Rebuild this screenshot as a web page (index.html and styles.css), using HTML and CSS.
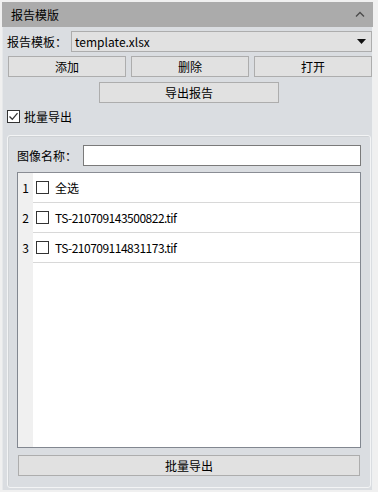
FILE: index.html
```html
<!DOCTYPE html>
<html lang="zh">
<head>
    <meta charset="UTF-8">
    <title>报告模版</title>
    <link rel="stylesheet" href="styles.css">
</head>
<body>
    <div class="panel">
        <!-- 标题栏 -->
        <div class="title-bar">
            <span>报告模版</span>
            <svg class="collapse" width="10" height="6" viewBox="0 0 10 6"><polyline points="1,5.5 5,1.5 9,5.5" fill="none" stroke="#4a4a4a" stroke-width="1.3"/></svg>
        </div>

        <!-- 模板选择 -->
        <div class="template-row">
            <span class="label">报告模板：</span>
            <div class="combo">
                <span>template.xlsx</span>
                <svg width="9" height="5" viewBox="0 0 9 5"><polygon points="0,0 9,0 4.5,5" fill="#111"/></svg>
            </div>
        </div>

        <div class="btn-row">
            <button class="btn">添加</button>
            <button class="btn">删除</button>
            <button class="btn">打开</button>
        </div>

        <div class="export-row">
            <button class="btn export-btn">导出报告</button>
        </div>

        <label class="check-row">
            <span class="check checked">
                <svg width="11" height="11" viewBox="0 0 11 11"><polyline points="1.5,5.5 4.3,8.3 9.5,2.2" fill="none" stroke="#333" stroke-width="1.3"/></svg>
            </span>
            <span>批量导出</span>
        </label>

        <!-- 批量导出 分组 -->
        <div class="group">
            <div class="name-row">
                <span class="label">图像名称：</span>
                <div class="text-input"></div>
            </div>

            <div class="table">
                <div class="row-head"></div>
                <div class="rows">
                    <div class="row"><span class="num">1</span><span class="check"></span><span>全选</span></div>
                    <div class="row"><span class="num">2</span><span class="check"></span><span class="file">TS-210709143500822.tif</span></div>
                    <div class="row"><span class="num">3</span><span class="check"></span><span class="file">TS-210709114831173.tif</span></div>
                </div>
            </div>

            <button class="btn batch-btn">批量导出</button>
        </div>
    </div>
</body>
</html>
```

FILE: styles.css
```css
/* 页面 */
body {
    margin: 0;
    background: #f0f0f0;
    font-family: "Microsoft YaHei", "Noto Sans CJK SC", sans-serif;
    font-size: 12px;
    color: #000;
}

/* 外框 */
.panel {
    margin: 2px 0 0 2px;
    width: 371px;
    height: 488px;
    background: #dadde1;
    border-left: 1px solid #e6e8ea;
    border-right: 1px solid #eef0f1;
    box-sizing: border-box;
    display: flex;
    flex-direction: column;
}

.title-bar {
    height: 25px;
    background: #ababab;
    display: flex;
    align-items: center;
    justify-content: space-between;
    padding: 0 8px 0 9px;
    margin-left: -1px;
    margin-right: -1px;
    font-size: 12px;
}

.collapse {
    margin-top: -1px;
}

.label {
    line-height: 20px;
    white-space: nowrap;
    flex-shrink: 0;
}

/* 模板选择 */
.template-row {
    display: flex;
    align-items: center;
    margin-top: 4px;
    padding-left: 4px;
}

.combo {
    margin-left: 4px;
    width: 301px;
    height: 21px;
    box-sizing: border-box;
    border: 1px solid #adadad;
    background: #e1e1e1;
    display: flex;
    align-items: center;
    justify-content: space-between;
    padding: 0 5px 0 3px;
}

/* 按钮 */
.btn {
    font-family: inherit;
    font-size: 12px;
    color: #000;
    background: #e1e1e1;
    border: 1px solid #adadad;
    height: 21px;
    padding: 0;
    line-height: 18px;
}

.btn-row {
    display: flex;
    gap: 5px;
    margin-top: 4px;
    padding-left: 5px;
}

.btn-row .btn {
    width: 118px;
}

.export-row {
    margin-top: 5px;
    padding-left: 96px;
}

.export-btn {
    width: 180px;
}

/* 复选框 */
.check {
    width: 13px;
    height: 13px;
    box-sizing: border-box;
    border: 1px solid #333;
    background: #fff;
    display: inline-flex;
    align-items: center;
    justify-content: center;
    flex-shrink: 0;
}

.check-row {
    display: flex;
    align-items: center;
    gap: 4px;
    margin-top: 7px;
    padding-left: 4px;
    font-size: 12px;
    height: 13px;
}

/* 分组框 */
.group {
    margin: 12px 0 0 4px;
    width: 364px;
    height: 353px;
    box-sizing: border-box;
    border: 1px solid #f3f4f5;
    border-radius: 3px;
    box-shadow: inset 1px 1px 0 #cfd2d5;
    padding: 9px 9px 0 9px;
    display: flex;
    flex-direction: column;
}

.name-row {
    display: flex;
    align-items: center;
    height: 21px;
}

.text-input {
    margin-left: 6px;
    flex: 1;
    height: 21px;
    box-sizing: border-box;
    border: 1px solid #7a7a7a;
    background: #fff;
}

/* 表格 */
.table {
    margin-top: 6px;
    height: 276px;
    box-sizing: border-box;
    border: 1px solid #828790;
    border-top-color: #8a8d94;
    display: flex;
    background: #fff;
    position: relative;
}

.row-head {
    width: 15px;
    background: #f0f0f0;
}

.rows {
    flex: 1;
}

.row {
    height: 30px;
    box-sizing: border-box;
    border-bottom: 1px solid #d8d8d8;
    display: flex;
    align-items: center;
    gap: 6px;
    padding-left: 3px;
}

.row .num {
    position: absolute;
    left: 0;
    width: 15px;
    text-align: center;
    font-size: 12px;
}

.row .check {
    width: 13px;
    height: 13px;
}

.file {
    letter-spacing: -0.5px;
}

.batch-btn {
    margin-top: 7px;
    width: 342px;
    margin-left: 1px;
}
```
